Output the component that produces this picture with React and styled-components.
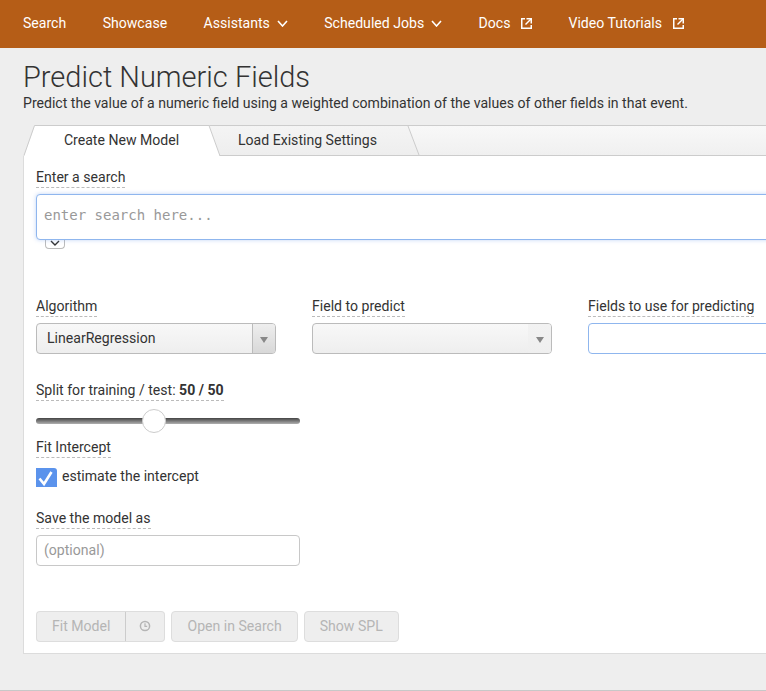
import React from "react";
import styled, {createGlobalStyle} from "styled-components";

const GlobalStyle = createGlobalStyle`
  html, body {
    margin: 0;
    height: 691px;
    overflow: hidden;
    background: #eeeeee;
  }
  body {
    font-family: Roboto, "Liberation Sans", sans-serif;
    font-size: 14.08px;
    color: #333;
  }
`;

const Page = styled.div`
  width: 766px;
  height: 691px;
  overflow: hidden;
  border-bottom: 1px solid #c8c8c8;
  box-sizing: border-box;
`;

const Nav = styled.nav`
  height: 48px;
  box-sizing: border-box;
  padding: 0 0 2px 23px;
  background: #b55d17;
  display: flex;
  align-items: center;
  gap: 36.4px;
`;

const NavItem = styled.a`
  color: #fff;
  font-size: 14.08px;
  display: flex;
  align-items: center;
  gap: ${(p) => p.$gap || 0}px;
`;

const Main = styled.main`
  padding: 13px 0 0 23px;
`;

const Title = styled.h1`
  margin: 0;
  font-size: 29px;
  line-height: 32px;
  font-weight: 300;
  color: #333;
`;

const Lead = styled.p`
  margin: 2px 0 0;
  font-size: 14.08px;
  line-height: 17px;
  color: #333;
`;

const Tabs = styled.div`
  margin-top: 13px;
  height: 29px;
  width: 800px;
  display: flex;
  align-items: flex-start;
  position: relative;
  background: linear-gradient(#f8f8f8, #f0f0f0);
  border-top: 1px solid #ccc;
  border-bottom: 1px solid #ccc;
`;

const Tab = styled.div`
  position: relative;
  flex: none;
  box-sizing: border-box;
  font-size: 14.08px;
  text-align: center;
  color: #333;
  height: ${(p) => (p.$active ? 31 : 29)}px;
  line-height: ${(p) => (p.$active ? 30 : 28)}px;
  margin-top: ${(p) => (p.$active ? -1 : 0)}px;
  width: ${(p) => p.$width}px;
  margin-left: ${(p) => p.$offset}px;
  padding-right: ${(p) => p.$shift || 0}px;
  z-index: ${(p) => (p.$active ? 2 : 1)};

  &::before {
    content: "";
    position: absolute;
    inset: 0;
    background: ${(p) => (p.$active ? "#fff" : "linear-gradient(#f4f4f4, #eeeeee)")};
    clip-path: polygon(${(p) => p.$clip});
    z-index: -1;
  }
`;

/* page colour showing through left of the first tab's slant */
const TabCorner = styled.span`
  position: absolute;
  left: 0;
  top: 0;
  width: 12px;
  height: 31px;
  background: #eeeeee;
  clip-path: polygon(0 0, 100% 0, 1px 100%, 0 100%);
`;

const TabEdge = styled.svg`
  position: absolute;
  left: 0;
  top: 0;
  overflow: visible;
`;

const Panel = styled.section`
  width: 800px;
  height: 498px;
  box-sizing: border-box;
  background: #fff;
  border-left: 1px solid #dcdcdc;
  border-bottom: 1px solid #dcdcdc;
  padding: 13px 0 0 12px;
`;

const FieldLabel = styled.label`
  display: inline-block;
  font-size: 14.08px;
  line-height: 17px;
  padding-bottom: 1px;
  color: #333;
  border-bottom: 1px dashed #bbb;
  vertical-align: top;

  b {
    font-weight: 700;
  }
`;

const SearchWrap = styled.div`
  position: relative;
  margin-top: 6px;
  height: 46px;
`;

const SearchBox = styled.div`
  height: 46px;
  box-sizing: border-box;
  background: #fff;
  border: 1px solid #8fb6ee;
  border-radius: 4px;
  box-shadow: 0 0 4px rgba(100, 150, 235, 0.4);
  padding: 0 7px;
  font-family: "DejaVu Sans Mono", monospace;
  font-size: 14px;
  line-height: 40px;
  color: #999;
  position: relative;
  z-index: 1;
`;

const Expander = styled.div`
  position: absolute;
  left: 9px;
  top: 45px;
  width: 20px;
  height: 10px;
  box-sizing: border-box;
  padding-bottom: 2px;
  background: #fff;
  border: 1px solid #bbb;
  border-top: 0;
  border-radius: 0 0 4px 4px;
  display: flex;
  align-items: center;
  justify-content: center;
`;

const FieldRow = styled.div`
  display: grid;
  grid-template-columns: 240px 240px 240px;
  column-gap: 36px;
  margin-top: 58px;
`;

const Column = styled.div`
  display: flex;
  flex-direction: column;
  align-items: flex-start;
`;

const Select = styled.div`
  margin-top: 6px;
  width: 240px;
  height: 31px;
  box-sizing: border-box;
  display: flex;
  border: 1px solid #bbb;
  border-radius: 4px;
  background: linear-gradient(#f8f8f8, #eeeeee);
  overflow: hidden;
`;

const SelectValue = styled.div`
  flex: 1;
  padding-left: 10px;
  line-height: 29px;
  font-size: 14.08px;
  color: #333;
`;

const SelectArrow = styled.div`
  width: 23px;
  box-sizing: border-box;
  display: flex;
  align-items: center;
  justify-content: center;
  border-left: ${(p) => (p.$plain ? "0" : "1px solid #bbb")};
  background: ${(p) => (p.$plain ? "linear-gradient(#f2f2f2, #efefef)" : "linear-gradient(#eeeeee, #d8d8d8)")};

  &::after {
    content: "";
    margin-top: 3px;
    border-left: 4px solid transparent;
    border-right: 4px solid transparent;
    border-top: 6px solid #888;
  }
`;

const MultiInput = styled.div`
  margin-top: 6px;
  width: 240px;
  height: 31px;
  box-sizing: border-box;
  background: #fff;
  border: 1px solid #8fb6ee;
  border-radius: 4px;
`;

const Group = styled.div`
  margin-top: ${(p) => p.$top}px;
`;

const Slider = styled.div`
  position: relative;
  margin-top: 8px;
  width: 264px;
  height: 24px;
  display: flex;
  align-items: center;
`;

const SliderTrack = styled.div`
  width: 100%;
  height: 6px;
  border-radius: 3px;
  background: linear-gradient(#444, #b0b0b0);
`;

const SliderThumb = styled.div`
  position: absolute;
  left: 106px;
  top: 0;
  width: 24px;
  height: 24px;
  box-sizing: border-box;
  background: #fff;
  border: 1px solid #ccc;
  border-radius: 50%;
`;

const CheckRow = styled.div`
  display: flex;
  align-items: flex-start;
  gap: 5px;
  margin-top: 10px;
  font-size: 14.08px;
  line-height: 17px;
`;

const CheckBox = styled.div`
  width: 21px;
  height: 19px;
  background: #5b93ec;
  border-radius: 0 3px 0 0;
`;

const TextInput = styled.div`
  margin-top: 6px;
  width: 264px;
  height: 31px;
  box-sizing: border-box;
  border: 1px solid #c8c8c8;
  border-radius: 4px;
  background: #fff;
  padding-left: 7px;
  line-height: 29px;
  font-size: 14.08px;
  color: #999;
`;

const ButtonRow = styled.div`
  display: flex;
  gap: 6px;
  margin-top: 45px;
`;

const ButtonGroup = styled.div`
  display: flex;
`;

const Button = styled.button`
  height: 31px;
  box-sizing: border-box;
  padding: 0 ${(p) => p.$pad}px 2px;
  background: #eeeeee;
  border: 1px solid #ddd;
  border-radius: ${(p) => p.$radius || "4px"};
  border-left-width: ${(p) => (p.$joined ? 0 : 1)}px;
  font-family: inherit;
  font-size: 14.08px;
  color: #b5b5b5;
  display: flex;
  align-items: center;

  ${(p) => p.$divider && "border-right-color: #ccc;"}
`;

function ClockIcon() {
  return (
    <svg width="12" height="12" viewBox="0 0 12 12" fill="none" stroke="#b5b5b5" strokeWidth="1.5">
      <circle cx="6" cy="6" r="4.6" />
      <path d="M6 3.2V6.3H8.2" strokeWidth="1.2" />
    </svg>
  );
}

function Chevron({width, height, color, strokeWidth}) {
  return (
    <svg width={width} height={height} viewBox={`0 0 ${width} ${height}`} fill="none" stroke={color} strokeWidth={strokeWidth}>
      <path d={`M1 1L${width / 2} ${height - 1}L${width - 1} 1`} />
    </svg>
  );
}

function ExternalIcon() {
  return (
    <svg width="11" height="11" viewBox="0 0 11 11" fill="none" stroke="#fff" strokeWidth="1.5">
      <path d="M4 .75H.75V10.25H10.25V7" />
      <path d="M5.5 .75H10.25V5.5" />
      <path d="M10 1L4.5 6.5" />
    </svg>
  );
}

function NavLink({children}) {
  return (
    <NavItem $gap={10.6}>
      {children}
      <ExternalIcon />
    </NavItem>
  );
}

function NavMenu({children}) {
  return (
    <NavItem $gap={7}>
      {children}
      <Chevron width={11} height={7} color="#fff" strokeWidth={1.6} />
    </NavItem>
  );
}

function App() {
  return (
    <Page>
      <GlobalStyle />
      <Nav>
        <NavItem>Search</NavItem>
        <NavItem>Showcase</NavItem>
        <NavMenu>Assistants</NavMenu>
        <NavMenu>Scheduled Jobs</NavMenu>
        <NavLink>Docs</NavLink>
        <NavLink>Video Tutorials</NavLink>
      </Nav>
      <Main>
        <Title>Predict Numeric Fields</Title>
        <Lead>Predict the value of a numeric field using a weighted combination of the values of other fields in that event.</Lead>
        <Tabs>
          <Tab $active $width={197} $offset={0} $clip="1px 100%, 11.5px 0, 186px 0, 100% 100%">
            <TabCorner />
            <TabEdge width="197" height="31">
              <path d="M1 30.5L11.5 .5H186L197 31" fill="none" stroke="#ccc" />
            </TabEdge>
            Create New Model
          </Tab>
          <Tab $width={210} $offset={-11} $shift={13} $clip="0 0, 199px 0, 100% 100%, 11px 100%">
            <TabEdge width="210" height="29">
              <path d="M199 0L210 29" fill="none" stroke="#ccc" />
            </TabEdge>
            Load Existing Settings
          </Tab>
        </Tabs>
        <Panel>
          <FieldLabel>Enter a search</FieldLabel>
          <SearchWrap>
            <SearchBox>enter search here...</SearchBox>
            <Expander>
              <Chevron width={10} height={6} color="#333" strokeWidth={1.4} />
            </Expander>
          </SearchWrap>
          <FieldRow>
            <Column>
              <FieldLabel>Algorithm</FieldLabel>
              <Select>
                <SelectValue>LinearRegression</SelectValue>
                <SelectArrow />
              </Select>
            </Column>
            <Column>
              <FieldLabel>Field to predict</FieldLabel>
              <Select>
                <SelectValue />
                <SelectArrow $plain />
              </Select>
            </Column>
            <Column>
              <FieldLabel>Fields to use for predicting</FieldLabel>
              <MultiInput />
            </Column>
          </FieldRow>
          <Group $top={28}>
            <FieldLabel>Split for training / test: <b>50 / 50</b></FieldLabel>
            <Slider>
              <SliderTrack />
              <SliderThumb />
            </Slider>
          </Group>
          <Group $top={6}>
            <FieldLabel>Fit Intercept</FieldLabel>
            <CheckRow>
              <CheckBox>
                <svg width="21" height="19" viewBox="0 0 21 19" fill="none" stroke="#fff" strokeWidth="2.6">
                  <path d="M3.5 10.5L8 16L15.5 4" />
                </svg>
              </CheckBox>
              estimate the intercept
            </CheckRow>
          </Group>
          <Group $top={23}>
            <FieldLabel>Save the model as</FieldLabel>
            <TextInput>(optional)</TextInput>
          </Group>
          <ButtonRow>
            <ButtonGroup>
              <Button $pad={15} $radius="4px 0 0 4px" $divider>Fit Model</Button>
              <Button $pad={13} $radius="0 4px 4px 0" $joined><ClockIcon /></Button>
            </ButtonGroup>
            <Button $pad={15}>Open in Search</Button>
            <Button $pad={15}>Show SPL</Button>
          </ButtonRow>
        </Panel>
      </Main>
    </Page>
  );
}

export default App;
